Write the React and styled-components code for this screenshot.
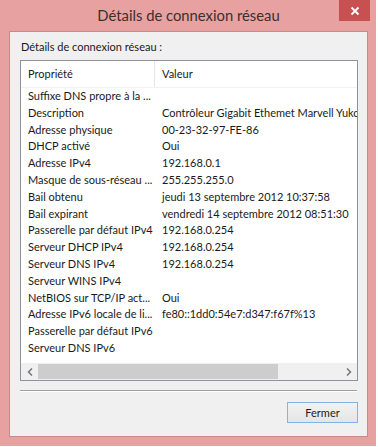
import React from 'react';
import styled, { createGlobalStyle } from 'styled-components';

const rows = [
  ['Suffixe DNS propre à la ...', ''],
  ['Description', 'Contrôleur Gigabit Ethemet Marvell Yukon 88E8057 PCI-E'],
  ['Adresse physique', '00-23-32-97-FE-86'],
  ['DHCP activé', 'Oui'],
  ['Adresse IPv4', '192.168.0.1'],
  ['Masque de sous-réseau ...', '255.255.255.0'],
  ['Bail obtenu', 'jeudi 13 septembre 2012 10:37:58'],
  ['Bail expirant', 'vendredi 14 septembre 2012 08:51:30'],
  ['Passerelle par défaut IPv4', '192.168.0.254'],
  ['Serveur DHCP IPv4', '192.168.0.254'],
  ['Serveur DNS IPv4', '192.168.0.254'],
  ['Serveur WINS IPv4', ''],
  ['NetBIOS sur TCP/IP act...', 'Oui'],
  ['Adresse IPv6 locale de li...', 'fe80::1dd0:54e7:d347:f67f%13'],
  ['Passerelle par défaut IPv6', ''],
  ['Serveur DNS IPv6', ''],
];

const App = () => (
  <>
    <GlobalStyle />
    <Window>
      <TitleBar>
        <span />
        <Title>Détails de connexion réseau</Title>
        <CloseButton>
          <svg width="10" height="10" viewBox="0 0 10 10">
            <path d="M1.5 1.5 L8.5 8.5 M8.5 1.5 L1.5 8.5" stroke="#fff" strokeWidth="1.8" />
          </svg>
        </CloseButton>
      </TitleBar>
      <Content>
        <Label>Détails de connexion réseau :</Label>
        <ListBox>
          <ListBody>
            <Header>
              <HeadCell>Propriété</HeadCell>
              <HeadCell>Valeur</HeadCell>
            </Header>
            {rows.map(([k, v]) => (
              <Row key={k}>
                <Cell>{k}</Cell>
                <Cell>{v}</Cell>
              </Row>
            ))}
          </ListBody>
          <ScrollBar>
            <Arrow>
              <svg width="6" height="8" viewBox="0 0 6 8">
                <path d="M5 0.5 L1.5 4 L5 7.5" stroke="#707070" strokeWidth="1.4" fill="none" />
              </svg>
            </Arrow>
            <Track>
              <Thumb />
            </Track>
            <Arrow>
              <svg width="6" height="8" viewBox="0 0 6 8">
                <path d="M1 0.5 L4.5 4 L1 7.5" stroke="#707070" strokeWidth="1.4" fill="none" />
              </svg>
            </Arrow>
          </ScrollBar>
        </ListBox>
        <Separator />
        <Footer>
          <Button>Fermer</Button>
        </Footer>
      </Content>
    </Window>
  </>
);

const GlobalStyle = createGlobalStyle`
  body {
    margin: 0;
    background: #ffffff;
    font-family: Lato, "Noto Sans", sans-serif;
  }
`;

const Window = styled.div`
  width: 376px;
  height: 446px;
  box-sizing: border-box;
  background: #e8a1a1;
  display: flex;
  flex-direction: column;
  padding: 0 8px 9px 9px;
`;

const TitleBar = styled.div`
  height: 31px;
  display: grid;
  grid-template-columns: 1fr auto 1fr;
  align-items: start;
  margin-right: -2px;
`;

const Title = styled.div`
  font-size: 14.8px;
  line-height: 31px;
  color: #3b2e2e;
  margin-left: -2px;
`;

const CloseButton = styled.div`
  justify-self: end;
  width: 31px;
  height: 21px;
  background: #c75050;
  display: flex;
  align-items: center;
  justify-content: center;
`;

const Content = styled.div`
  flex: 1;
  background: #f0f0f0;
  border: 1px solid #c98a8a;
  display: flex;
  flex-direction: column;
  padding: 7px 9px 0 10px;
`;

const Label = styled.div`
  font-size: 11px;
  line-height: 16px;
  color: #1a1a1a;
  margin-left: 1px;
  margin-bottom: 5px;
`;

const ListBox = styled.div`
  height: 321px;
  box-sizing: border-box;
  background: #ffffff;
  border: 1px solid #8f9398;
  display: flex;
  flex-direction: column;
`;

const ListBody = styled.div`
  flex: 1;
  overflow: hidden;
`;

const Header = styled.div`
  height: 26px;
  display: grid;
  grid-template-columns: 134px 1fr;
  border-bottom: 1px solid #f2f2f2;
`;

const HeadCell = styled.div`
  font-size: 11px;
  line-height: 26px;
  color: #1a1a1a;
  padding-left: 7px;
  &:first-child {
    border-right: 1px solid #e5e5e5;
  }
`;

const Row = styled.div`
  height: 16.8px;
  display: grid;
  grid-template-columns: 134px max-content;
`;

const Cell = styled.div`
  font-size: 11px;
  line-height: 16.8px;
  color: #1a1a1a;
  padding-left: 7px;
  white-space: nowrap;
`;

const ScrollBar = styled.div`
  height: 17px;
  background: #f0f0f0;
  display: flex;
`;

const Arrow = styled.div`
  width: 17px;
  display: flex;
  align-items: center;
  justify-content: center;
`;

const Track = styled.div`
  flex: 1;
  display: flex;
  padding: 1px 0;
`;

const Thumb = styled.div`
  width: 240px;
  background: #cdcdcd;
`;

const Separator = styled.div`
  margin-top: 9px;
  height: 1px;
  background: #a0a0a0;
  border-bottom: 1px solid #ffffff;
  margin-right: 1px;
`;

const Footer = styled.div`
  display: flex;
  justify-content: flex-end;
  padding-top: 10px;
`;

const Button = styled.div`
  width: 71px;
  height: 21px;
  box-sizing: border-box;
  border: 1px solid #7eb4ea;
  background: linear-gradient(#f2f2f2, #e5e5e5);
  font-size: 11px;
  line-height: 19px;
  text-align: center;
  color: #1a1a1a;
`;

export default App;
